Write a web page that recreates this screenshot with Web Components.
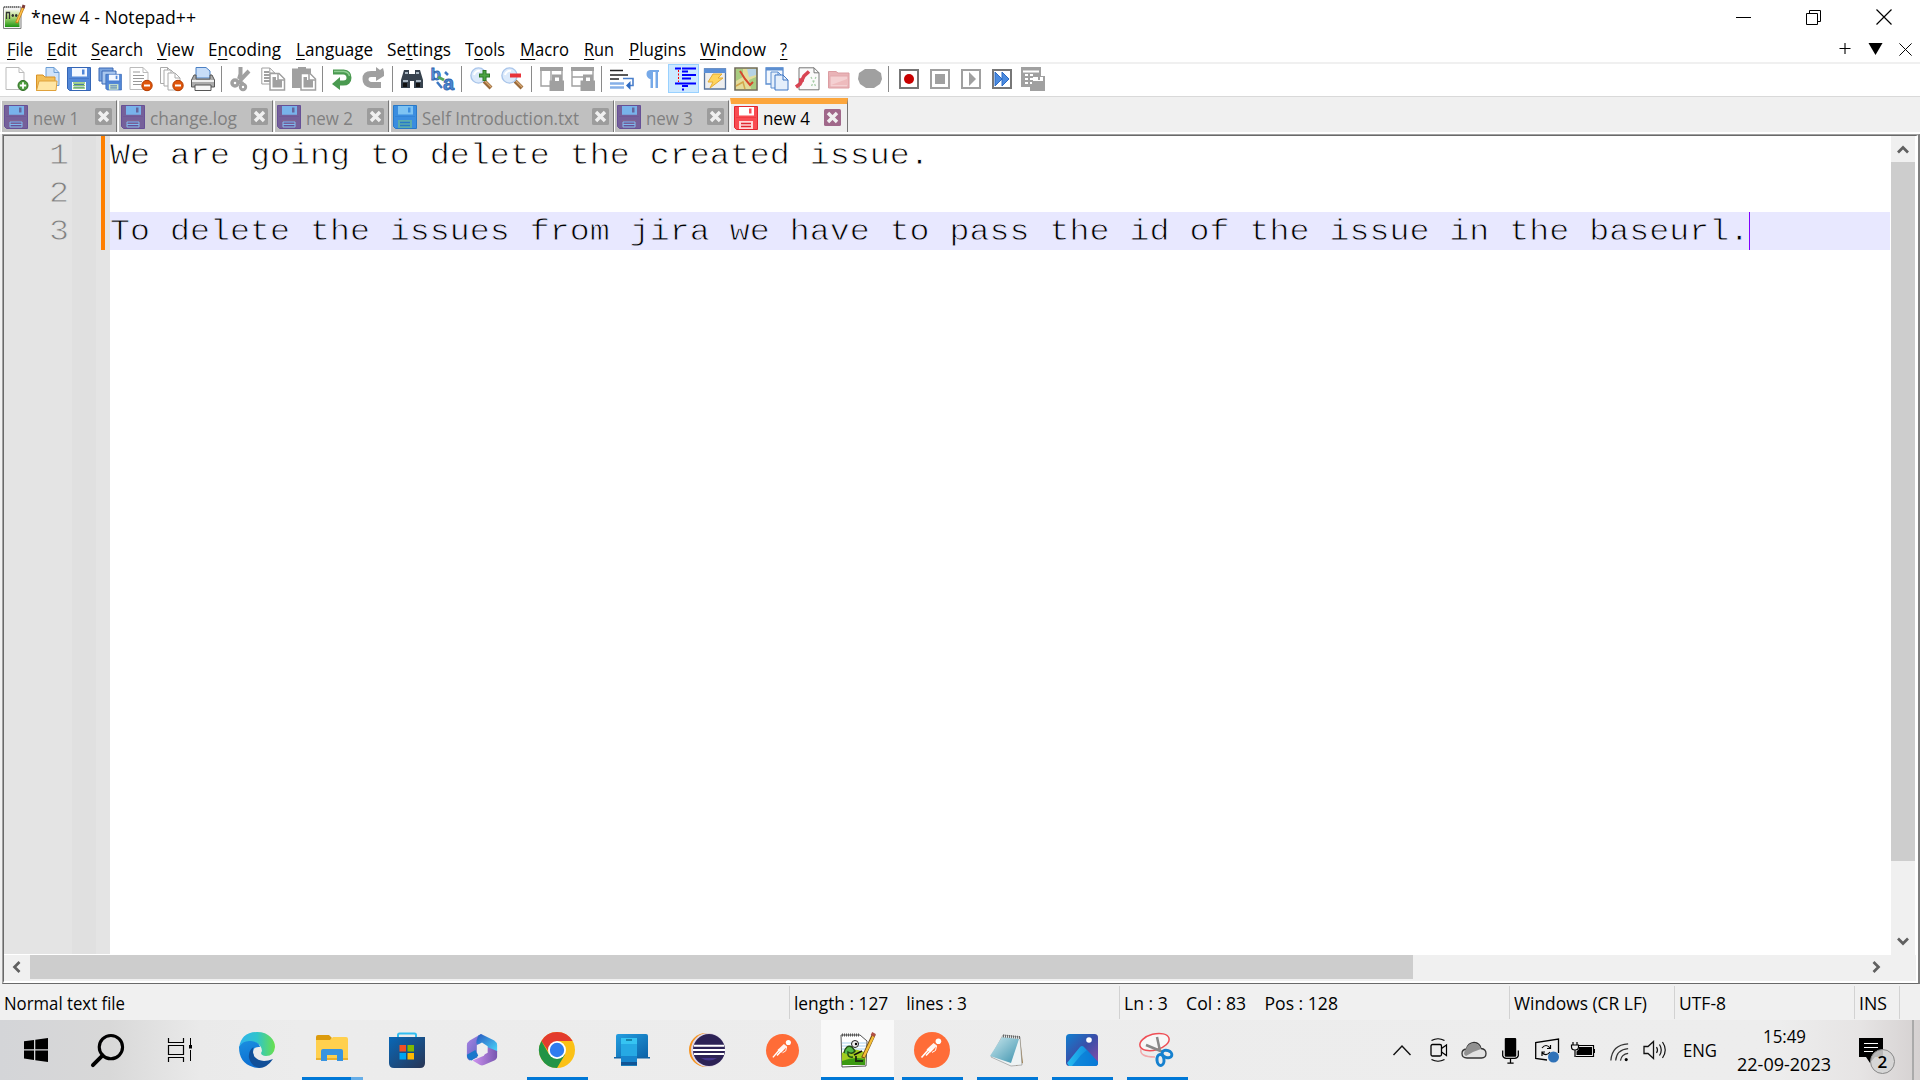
<!DOCTYPE html>
<html lang="en">
<head>
<meta charset="utf-8">
<title>*new 4 - Notepad++</title>
<style>
html,body{margin:0;padding:0;background:#fff;overflow:hidden}
body{width:1920px;height:1080px;font-family:"Open Sans","Liberation Sans",sans-serif;font-size:17.5px;font-weight:370;color:#000}
</style>
</head>
<body>
<app-window></app-window>
<script>
const define=(n,c)=>customElements.define(n,c);
const mount=(el,html)=>{el.attachShadow({mode:'open'}).innerHTML=html;};

const disk=(edge,fill,top,strip)=>`<path d="M.5 .5H23.5V23.5H2.5L.5 21.5Z" fill="${fill}" stroke="${edge}"/><path d="M5 1H20V9.5H5Z" fill="${top}"/><path d="M15 2.5H17.5V7.5H15Z" fill="${fill}"/><path d="M2 11.5H22" stroke="${edge}" stroke-opacity=".4"/><path d="M5 15H19V23H5Z" fill="${strip}"/><path d="M7 17.5H17M7 20.5H17" stroke="${edge}" stroke-width="1.4"/>`;
const page=(x,y,w,h,s='#888',f='#fff')=>`<path d="M${x} ${y}H${x+w-5}L${x+w} ${y+5}V${y+h}H${x}Z" fill="${f}" stroke="${s}"/><path d="M${x+w-5} ${y}V${y+5}H${x+w}" fill="none" stroke="${s}"/>`;
const minus=`<circle cx="18" cy="18.5" r="5.2" fill="#e0570c" stroke="#b33c00"/><path d="M15 18.5H21" stroke="#fff" stroke-width="2"/>`;
const lens=`<path d="M14 14L21 21" stroke="#9a6a3a" stroke-width="4"/><path d="M15 14L21 20" stroke="#d7a873" stroke-width="1.3"/><circle cx="8.5" cy="8.5" r="7.6" fill="#dceafb" stroke="#a9c5ea" stroke-width="1.4"/><path d="M4 8a5 5 0 0 1 6-4" stroke="#fff" stroke-width="2" fill="none"/>`;
const runner=`<path d="M7.5 25.5L15 17M12 23.5L18 17" stroke="#fff" stroke-width="1.6" fill="none"/><path d="M12.5 17.5L19.5 11L23 13.5L16.5 20.5Z" fill="#fff" opacity=".92"/><circle cx="24.4" cy="9.3" r="2.8" fill="#fff"/><path d="M22.5 14L21.5 18.5L18 20.5" stroke="#fff" fill="none"/>`;
const ICONS={
 app:[24,`<defs><linearGradient id="g" y2="1" x2="0"><stop stop-color="#eef3e4"/><stop offset=".4" stop-color="#b5dc7c"/><stop offset="1" stop-color="#1f9413"/></linearGradient></defs><path d="M1.500 2H19V23.500H1.500Z" fill="#f4f4f4" stroke="#808080"/><path d="M2 2H18" stroke="#777" stroke-width="2" stroke-dasharray="1 1"/><path d="M3 5H17.500V22H3Z" fill="url(#g)"/><path d="M4.500 14V7.500H7.500V14M9.500 10.500H12M10.800 9V12M13 10.500H15.500M14.200 9V12" stroke="#333" fill="none" stroke-width="1.300"/><path d="M21.500 2L14.500 18" stroke="#c27d16" stroke-width="3"/><path d="M21 3L15 17" stroke="#ffc24d" stroke-width="1.500"/><path d="M22 0L21 3" stroke="#7c3c3c" stroke-width="3"/>`],
 new:[24,page(1,.5,18,22,'#bbb')+`<circle cx="18" cy="18.5" r="5" fill="#4b9b3b" stroke="#2d6b22"/><path d="M18 15.3V21.7M14.8 18.5H21.2" stroke="#fff" stroke-width="1.8"/>`],
 open:[24,page(10,.5,13,18,'#6d9ed4','#cfe3fa')+`<path d="M.5 8H7L9 10H19V23.5H.5Z" fill="#f2bf58" stroke="#d99226"/><path d="M3 14H21L20 23.5H.5Z" fill="#ffe6a4" stroke="#e0a23c"/>`],
 save:[24,disk('#3465b5','#5388d8','#f4f8ff','#fff')+`<path d="M6 16H18M6 18.5H18M6 21H18" stroke="#8ac66b" stroke-width="1.4"/>`],
 saveall:[24,`<path d="M1 1H15V14H1Z" fill="#7aa4df" stroke="#3a69b5"/><path d="M4 4H18V17H4Z" fill="#a9c7ee" stroke="#3a69b5"/><g transform="translate(7.5 7) scale(.68)">${disk('#3465b5','#5388d8','#f4f8ff','#d9efc8')}</g>`],
 close:[24,page(1,.5,18,22,'#bbb')+`<path d="M4 5H11M4 8.5H15M4 11.5H15M4 14.5H13M4 17.5H12" stroke="#999"/>`+minus],
 closeall:[24,page(.5,.5,12,16,'#aaa')+page(4,3,12,16,'#aaa')+page(8,6,12,17,'#aaa')+minus],
 print:[24,`<path d="M5 11V.5H15L19 4V11Z" fill="#c7ddf8" stroke="#4b80c4"/><path d="M3 8H5V12H19V8H21L23.5 13V20H.5V13Z" fill="#ababab" stroke="#555"/><path d="M1 14H23" stroke="#eee" stroke-width="2"/><path d="M4 18H20V23.5H4Z" fill="#f7f7f7" stroke="#555"/>`],
 cut:[24,`<path d="M10.500 0V7L9 12M19 4L10 13.500" stroke="#a0a0a0" stroke-width="4" fill="none"/><circle cx="5" cy="16" r="3" stroke="#a0a0a0" stroke-width="3.500" fill="none"/><circle cx="13" cy="20" r="2.700" stroke="#a0a0a0" stroke-width="3" fill="none"/><path d="M8 14L13 17" stroke="#a0a0a0" stroke-width="4"/>`],
 copy:[24,page(.8,1,13,16,'#a0a0a0')+`<path d="M3 5H8M3 8H9M3 11H9M3 14H9" stroke="#a0a0a0" stroke-width="2"/>`+`<path d="M9 6.500H18L23.500 12V23H9Z" fill="#fff" stroke="#a0a0a0" stroke-width="1.500"/><path d="M17 7V13H23" fill="#fff" stroke="#a0a0a0" stroke-width="1.500"/><path d="M11.500 10H15V13H21V20.500H11.500Z" fill="#a0a0a0"/>`],
 paste:[24,`<path d="M0 1.500H6V0H14V1.500H19V21H0Z" fill="#a0a0a0"/><path d="M9 6.500H18L23.500 12V23H9Z" fill="#fff" stroke="#a0a0a0" stroke-width="1.500"/><path d="M17 7V13H23" fill="#fff" stroke="#a0a0a0" stroke-width="1.500"/><path d="M11.500 10H15V13H21V20.500H11.500Z" fill="#a0a0a0"/>`],
 undo:[24,`<path d="M2 5H12.500Q18 5.500 18 10.800T12 16H7" stroke="#4a9a50" stroke-width="5" fill="none"/><path d="M9 10V23L1 17Z" fill="#4a9a50"/><path d="M3 4.500H13Q17.500 5 18.500 9" stroke="#8dcc90" stroke-width="1.500" fill="none"/>`],
 redo:[24,`<path d="M16 7H9Q3.500 7 3.500 12T9 18H19" stroke="#a0a0a0" stroke-width="6" fill="none"/><path d="M14 0V14L22 9V5L21 1L18 3Z" fill="#a0a0a0"/>`],
 find:[24,`<path d="M4 3H9V7H15V3H20L23 13V21H14V14H10V21H1V13Z" fill="#37424e"/><path d="M3 14H8M16 14H21M5 6H8M16 6H19" stroke="#a9b6c2" stroke-width="2"/><path d="M3 18H7M16 18H20" stroke="#111" stroke-width="4"/>`],
 replace:[24,`<text x="-.5" y="13" font-family="Liberation Sans" font-weight="bold" font-size="17" fill="#5b94da" stroke="#2c62ad" stroke-width=".8">b</text><text x="12" y="23" font-family="Liberation Sans" font-weight="bold" font-size="20" fill="#4c88d2" stroke="#2c62ad" stroke-width=".8">a</text><path d="M6 15L11 21M14 5L17 8" stroke="#3d77c2" stroke-width="2.500"/><path d="M7 10L13 13" stroke="#54a65a" stroke-width="3"/>`],
 zoomin:[24,lens+`<path d="M14.500 3V14M9 8.500H20" stroke="#2d7827" stroke-width="4"/><path d="M14.500 4V13M10 8.500H19" stroke="#4da344" stroke-width="2"/>`],
 zoomout:[24,lens+`<path d="M9 8.500H20" stroke="#e8333a" stroke-width="4"/>`],
 syncv:[24,`<path d="M1 1H22V19H1ZM11 1V19" fill="none" stroke="#a0a0a0" stroke-width="1.400"/><path d="M0 2H23" stroke="#a0a0a0" stroke-width="4"/><path d="M12 9.500H20V7H16Z" fill="#fff"/><path d="M9.500 13.500H24V24H9.500Z" fill="#a0a0a0"/><path d="M13.500 14V9H20.500V14" fill="#fff" stroke="#a0a0a0" stroke-width="3"/>`],
 synch:[24,`<path d="M1 1H22V19H1ZM1 10H22" fill="none" stroke="#a0a0a0" stroke-width="1.400"/><path d="M0 2H23" stroke="#a0a0a0" stroke-width="4"/><path d="M9.500 13.500H24V24H9.500Z" fill="#a0a0a0"/><path d="M13.500 14V9H20.500V14" fill="#fff" stroke="#a0a0a0" stroke-width="3"/>`],
 wrap:[24,`<path d="M0 3.500H13M0 8H18M0 12H9" stroke="#222" stroke-width="1.500"/><path d="M0 16.500H14M0 20.500H14" stroke="#86b0e8" stroke-width="2.500"/><path d="M13 11.500H23V18.500H19" fill="none" stroke="#4a7fcb" stroke-width="1.600"/><path d="M20.500 14V23L16 18.500Z" fill="#2f6bc2"/>`],
 pilcrow:[24,`<path d="M18 3H9Q5.500 3.500 5.500 7T9 12H9.500V21H12V5H14.500V21H17V5H18Z" fill="#76a9e8"/>`],
 indent:[24,`<path d="M3 1.500H9M10 1.500H24M10 4.500H16M10 8H24M10 11.500H19M3 16.500H24M3 16.500H9M10 19H16M10 22.500H12" stroke="#00f" stroke-width="2"/><path d="M6.500 3V15" stroke="red" stroke-width="1" stroke-dasharray="2 1.500"/>`],
 udl:[24,`<path d="M1.500 2H22.500V22H1.500Z" fill="#eee" stroke="#58749c" stroke-width="1.300"/><path d="M1 1.500H23V6H1Z" fill="#5b8fd6"/><path d="M10 7H19L15 11H20L7 21L10 15H5Z" fill="#ffd45d" stroke="#e6ad35"/>`],
 map:[24,`<path d="M1 1H23V23H1Z" fill="#e3dc9b" stroke="#6f6c5b" stroke-width="1.600"/><path d="M2 2H9V10L2 14ZM15 13L22 10V22H17Z" fill="#a9cc80"/><path d="M13 2H22V8L15 10Z" fill="#b5d2e4"/><path d="M6 4L11 12L16 18L19 15" stroke="#d6472d" stroke-width="2" fill="none"/><path d="M2 19L9 15L11 22" stroke="#d3a64b" stroke-width="1.500" fill="none"/>`],
 doclist:[24,`<path d="M1 1H18V17H1Z" fill="#f2f7fd" stroke="#5c8ed0" stroke-width="1.300"/><path d="M1 2H18" stroke="#5c8ed0" stroke-width="3"/>`+page(6,5,12,16,'#5c8ed0','#e5effb')+page(10,8,13,15,'#3f77c4','#e5effb')],
 func:[24,page(3,.8,20,22,'#777','#fafafa')+`<path d="M0 20L4 17L8 9L13 4.500M3 13H8" fill="none" stroke="#d84452" stroke-width="3.600"/><path d="M15 10L20 20M20 10L15 20" stroke="#a8cda8" stroke-width="1.300" stroke-dasharray="2 2"/>`],
 folder:[24,`<path d="M1.500 4.500H9L11 6H22V21H1.500Z" fill="#e9b3b7" stroke="#dc9da2"/><path d="M3 9H21V20H3Z" fill="#f4d0d2" stroke="#e3a9ad"/><path d="M4 18L20 12V18Z" fill="#eebbbd"/>`],
 monitor:[24,`<path d="M7 2H17L23 6L24 12L22 17L16 21H8L2 17L0 12L1 6Z" fill="#a0a0a0"/>`],
 rec:[24,`<path d="M3 3H21V21H3Z" fill="#fff" stroke="#777" stroke-width="2"/><circle cx="12" cy="12" r="5" fill="#c80000"/>`],
 stop:[24,`<path d="M3 3H21V21H3Z" fill="#fff" stroke="#a0a0a0" stroke-width="2"/><path d="M7 7H17V17H7Z" fill="#a0a0a0"/>`],
 play:[24,`<path d="M3 3H21V21H3Z" fill="#fff" stroke="#a0a0a0" stroke-width="2"/><path d="M10 5L17 12L10 19Z" fill="#a0a0a0"/>`],
 ff:[24,`<path d="M3 3H21V21H3Z" fill="#fff" stroke="#777" stroke-width="2"/><path d="M5 5L12 12L5 19ZM12 5L19 12L12 19Z" fill="#4b8be0" stroke="#2b6ac4"/>`],
 macro:[24,`<path d="M0 0H20V9H24V24H9V20H0Z" fill="#a0a0a0"/><path d="M2 4.500H18M4 8H7M9 8H12M4 12H7M9 12H12M4 16H7M9 16H11" stroke="#fff" stroke-width="1.800"/><path d="M12 10H22V14H12Z" fill="#fff"/><path d="M18 10V13" stroke="#a0a0a0" stroke-width="2"/>`],
 diskOld:[24,disk('#665096','#75609a','#7ebaf0','#806492')+`<path d="M5 1H20V9.500H5Z" fill="#78b3eb"/><path d="M15 2.500H17.500V7.500H15Z" fill="#65659d"/><path d="M6 17H18V22H6Z" fill="none" stroke="#7ebaf0"/><path d="M6 19.500H18" stroke="#7ebaf0"/>`],
 diskBlue:[24,disk('#2879c7','#3b8de0','#7ec3f3','#5cacad')],
 diskRed:[24,disk('#e02730','#f94c52','#fff','#ffd9d9')],
 win:[24,`<path d="M0 3.300L10 1.900V11.300H0ZM11.300 1.700L24 0V11.300H11.300ZM0 12.500H10V22L0 20.600ZM11.300 12.500H24V24L11.300 22.300Z"/>`],
 search:[36,`<circle cx="21.500" cy="14.500" r="12" fill="none" stroke="#000" stroke-width="3.200"/><path d="M13 23L3 33" stroke="#000" stroke-width="4" stroke-linecap="round"/>`],
 task:[24,`<path d="M.5 0V4.500H15.500V0M.5 24V19.500H15.500V24M.5 7.500H15.500V16.500H.5Z" fill="none" stroke="#000" stroke-width="1.200"/><path d="M22.500 0V7M22.500 12V23" stroke="#000"/><path d="M21 7H24V10.500H21Z"/>`],
 edge:[36,`<defs><linearGradient id="a" x2="1"><stop stop-color="#2fb3ee"/><stop offset=".5" stop-color="#2fc4cc"/><stop offset="1" stop-color="#69e04b"/></linearGradient><linearGradient id="b" y2="1" x2=".3"><stop stop-color="#1b8fe0"/><stop offset="1" stop-color="#0c6ed1"/></linearGradient></defs><path d="M0 16Q2 0 18 0C30 0 36 8 36 15Q35 24 27 24Q20 23 23 19Q22 10 12 10Q4 10 0 16Z" fill="url(#a)"/><path d="M0 15Q4 8 12 9Q20 10 21 15Q14 14 14 21Q16 31 26 34Q20 37 14 35Q0 31 0 15Z" fill="url(#b)"/><path d="M14.500 15Q9 19 10 26Q12 34 20 36Q28 36 34 27Q21 32 15 24Q13 19 14.500 15Z" fill="#114f98"/>`],
 explorer:[32,`<path d="M0 3Q0 1 2 1H13L16 4L13 8H0Z" fill="#dc9b0c"/><path d="M0 6H14L17 3H30Q32 3 32 5V26H0Z" fill="#ffd04e"/><path d="M0 24H32V26H0Z" fill="#eab02e"/><path d="M5 27V17Q5 15 7 15H25Q27 15 27 17V27H21V21H11V27Z" fill="#3894e0"/>`],
 store:[36,`<defs><linearGradient id="s" x2="1" y2="1"><stop stop-color="#0868b8"/><stop offset="1" stop-color="#293554"/></linearGradient></defs><path d="M9 6V3Q9 1.500 10.500 1.500H25.500Q27 1.500 27 3V6" fill="none" stroke="#31bdf0" stroke-width="2"/><path d="M0 5H36V31Q36 36 31 36H5Q0 36 0 31Z" fill="url(#s)"/><path d="M10.500 13H17V19.500H10.500Z" fill="#f25022"/><path d="M18.500 13H25V19.500H18.500Z" fill="#7fba00"/><path d="M10.500 21H17V27.500H10.500Z" fill="#00a4ef"/><path d="M18.500 21H25V27.500H18.500Z" fill="#ffb900"/>`],
 office:[36,`<defs><linearGradient id="o" y2="1"><stop stop-color="#b084e6"/><stop offset="1" stop-color="#4d62ba"/></linearGradient><linearGradient id="p" x2="1" y2="1"><stop stop-color="#2858c0"/><stop offset="1" stop-color="#4ad7fa"/></linearGradient><linearGradient id="q" x2="1"><stop stop-color="#cf94f0"/><stop offset="1" stop-color="#7756b0"/></linearGradient></defs><path d="M17 1L5 8Q2 10 2 13V25Q2 28 5 29L13 26V13L19 10Z" fill="url(#o)"/><path d="M17 1L31 8Q34 10 34 13V20L24 16L12 11Q12 3 17 1Z" fill="url(#p)"/><path d="M8 29L20 24L24 15L34 19V25Q34 28 31 29L20 34Q18 35 16 34Z" fill="url(#q)"/><path d="M2 23L11 18L14 24L7 29Q2 28 2 23Z" fill="#1978cb"/><path d="M12.500 13L18 10L24 14V21L18 24L12.500 21Z" fill="#eee"/>`],
 chrome:[36,`<circle cx="18" cy="18" r="18" fill="#fbc116"/><path d="M2.400 9A18 18 0 0 1 33.600 9H18L12 23Z" fill="#e33b2e"/><path d="M2.400 9A18 18 0 0 0 18 36L26 22.500L10.200 22.500Z" fill="#229446"/><circle cx="18" cy="18" r="9" fill="#fff"/><circle cx="18" cy="18" r="7.200" fill="#2e7cef"/>`],
 phone:[36,`<defs><linearGradient id="h" x2="1" y2="1"><stop stop-color="#249ee0"/><stop offset="1" stop-color="#0b62a8"/></linearGradient></defs><path d="M2 4Q2 2 4 2H32Q34 2 34 4V25H2Z" fill="url(#h)"/><path d="M0 25H36V26.500H0Z" fill="#1263a3"/><path d="M7 7H23V34H7Z" fill="#26a9e4"/><path d="M7 6H23V12H7Z" fill="#36c4f2"/><path d="M7 24H23V30H7Z" fill="#1785cd"/><path d="M7 30H23V33.500H7Z" fill="#105495"/><path d="M12 8H18" stroke="#1684ad" stroke-width="2"/>`],
 eclipse:[36,`<circle cx="17" cy="18" r="17" fill="#f7941e"/><circle cx="19" cy="18" r="17" fill="#e0d8e8"/><circle cx="20" cy="18" r="16" fill="#2c2255"/><path d="M5 13.800H35M4 18H36M5 22H35" stroke="#fff" stroke-width="2"/><path d="M12 26Q20 31 28 26" fill="#43358c"/>`],
 postman:[36,`<circle cx="18" cy="18" r="18" fill="#ff6c37"/>`+runner],
 npp:[36,`<path d="M2 3H21L28 9L27 34L3 35Z" fill="#fff" stroke="#555"/><path d="M3 3H20" stroke="#555" stroke-dasharray="1 1" stroke-width="3"/><path d="M3 11H27M3 14H27M3 17H27" stroke="#a9d2ed"/><path d="M3 21Q14 14 27 21L26 33H3Z" fill="#a2cc1f"/><path d="M3 29Q15 24 26 27V33H3Z" fill="#3c9a12"/><path d="M5 21Q7 12 13 15L16 19Q13 23 9 20Q8 26 14 25" stroke="#234d13" fill="#55b948" stroke-width="1.500"/><circle cx="16" cy="12" r="3.500" fill="#eee" stroke="#222"/><circle cx="17" cy="12" r="1.200"/><path d="M15 23L23 19M17 28V24M16 29H24" stroke="#111" stroke-width="1.600"/><path d="M35 2L24 26" stroke="#704b14" stroke-width="3.800"/><path d="M34.500 4L24.500 25" stroke="#f4be38" stroke-width="2.400"/><path d="M35 1L33.500 4" stroke="#b05046" stroke-width="4"/>`],
 notepad:[36,`<defs><linearGradient id="n" x2="1" y2="1"><stop stop-color="#cce9ef"/><stop offset="1" stop-color="#3d93ae"/></linearGradient></defs><path d="M27 5L31 6L34 31L27 34Z" fill="#a48048"/><path d="M14 3L31 5L33 33L22 34L2 25Z" fill="#eef3f4" stroke="#888" stroke-width=".6"/><path d="M13 5L30 7L22 31L1 24Z" fill="url(#n)"/><path d="M14 4L31 5.500" stroke="#666" stroke-width="3" stroke-dasharray="1 1"/>`],
 photos:[36,`<defs><linearGradient id="v" x2="1" y2="1"><stop stop-color="#117fd0"/><stop offset=".5" stop-color="#3a4ea8"/><stop offset="1" stop-color="#8f4ca8"/></linearGradient><linearGradient id="w" x2="1"><stop stop-color="#27bdf0"/><stop offset="1" stop-color="#0878d8"/></linearGradient></defs><rect x="2" y="2" width="32" height="32" rx="3.500" fill="url(#v)"/><circle cx="25" cy="8" r="2.800" fill="#fff"/><path d="M3 31L16 15Q18 13 20 15L34 30V31Q34 34 31 34H5Z" fill="url(#w)"/><path d="M17 23L23 18L34 30Q34 34 31 34H8Z" fill="#0879d4" opacity=".7"/>`],
 snip:[36,`<ellipse cx="16" cy="10" rx="15" ry="8" transform="rotate(-15 16 12)" fill="#f7f7f7" stroke="#ef4e55" stroke-width="1.500"/><path d="M2 17Q0 25 16 25" fill="none" stroke="#f2a8ab" stroke-width="1.500"/><path d="M7 13L24 20M18 5L21 19" stroke="#888" stroke-width="2.500"/><ellipse cx="28" cy="22" rx="5" ry="3.500" fill="none" stroke="#1681cf" stroke-width="3" transform="rotate(20 28 22)"/><ellipse cx="21.500" cy="28" rx="3.500" ry="5.500" fill="none" stroke="#1681cf" stroke-width="3" transform="rotate(-5 21 28)"/>`],
 chevron:[24,`<path d="M3.500 17L12 8L20.500 17" fill="none" stroke="#111" stroke-width="1.400"/>`],
 camera:[24,`<path d="M5.500 2.500Q12-1 18.500 2.500M5.500 21.500Q12 25 18.500 21.500" fill="none" stroke="#000" stroke-width="1.200"/><rect x="5" y="6.500" width="10.500" height="11.500" rx="1.500" fill="none" stroke="#000" stroke-width="1.300"/><path d="M15.500 10.500L20.500 7V17.500L15.500 14" fill="none" stroke="#000" stroke-width="1.200"/>`],
 cloud:[24,`<path d="M5 20Q0 20 0 15.500Q0 11.500 4.500 11Q6 5 12 4.500Q18 5 19 10.500Q24 11 24 15.500Q24 20 19.500 20Z" fill="#e2e2e2" stroke="#333" stroke-width="1.300"/><path d="M4 11Q6 5 12 5Q18 6 19 11L11 14L4 18Q0 16 4 11Z" fill="#909090"/>`],
 mic:[24,`<rect x="6.500" y="0" width="11" height="18" rx="1"/><path d="M4.500 12V17Q5 19.500 8 19.500H16Q19 19.500 19.500 17V12M12 20V24M9 24H15" fill="none" stroke="#000" stroke-width="1.200"/>`],
 update:[24,`<path d="M12 22L.7 20.500V4.500L23.500 1V15" fill="none" stroke="#000" stroke-width="1.300"/><path d="M7 10Q11 5 15 10M15.500 7V10.500H12M15 14Q11 19 7 14.500M7 18V14H10" fill="none" stroke="#000" stroke-width="1.200"/><circle cx="18.500" cy="19" r="5.500" fill="#2f72b8"/>`],
 battery:[24,`<path d="M5 7.500H22.500V18.500H4.500" fill="none" stroke="#000" stroke-width="1.200"/><path d="M8 9H21V17H5.500V13.500L8 11ZM22.500 11H24V15H22.500Z"/><path d="M2 4V7M6 4V7M.5 7H7.500V9Q7.500 12 4 12T.5 9ZM4 12V19" fill="#eee" stroke="#000" stroke-width="1.200"/>`],
 wifi:[24,`<path d="M3 22.500Q4 6 21 5M8 22.500Q9 11 21 10M13 22.500Q14 16 21 15" fill="none" stroke="#333" stroke-width="1.300"/><circle cx="19" cy="21.500" r="1.600"/>`],
 volume:[24,`<path d="M1 8.500H5L10.500 3.500V20.500L5 15.500H1Z" fill="none" stroke="#111" stroke-width="1.300"/><path d="M13.500 9Q15.500 12 13.500 15M16.500 6.500Q20 12 16.500 17.500M19.500 4Q25 12 19.500 20" fill="none" stroke="#111" stroke-width="1.200"/>`],
 min:[16,`<path d="M0 8.500H15" stroke="#000"/>`],
 restore:[16,`<path d="M.5 4.500H11.500V15.500H.5ZM3.500 4.500V1.500H14.500V12.500H11.500" fill="none" stroke="#000"/>`],
 x:[16,`<path d="M.5 .5L15.500 15.500M15.500 .5L.5 15.500" stroke="#000" stroke-width="1.200"/>`],
 plus:[16,`<path d="M2.500 8.500H13.500M8 3V14" stroke="#000" stroke-width="1.100"/>`],
 down:[16,`<path d="M.5 2H15.500L8 15Z"/>`],
 tabx:[17,`<rect width="17" height="17" rx="1.500" fill="currentColor"/><path d="M4 4L13 13M13 4L4 13" stroke="#f0f0f0" stroke-width="3.400"/>`],
 arrow:[16,`<path d="M3 10.500L8 5.500L13 10.500" fill="none" stroke="#606060" stroke-width="2.700"/>`],
};
define('ui-icon',class extends HTMLElement{connectedCallback(){
 const [v,p]=ICONS[this.getAttribute('name')],s=this.getAttribute('size')||v;
 mount(this,`<style>:host{display:block;flex:none;width:${s}px;height:${s}px}svg{display:block;overflow:visible}</style><svg width="${s}" height="${s}" viewBox="0 0 ${v} ${v}">${p}</svg>`);
}});

/* Text that is stretched or condensed to an exact width. */
define('fit-text',class extends HTMLElement{connectedCallback(){
 const w=+this.getAttribute('w');
 mount(this,`<style>:host{display:block;flex:none;width:${w}px;white-space:pre;line-height:24px}span{display:inline-block;transform-origin:0 50%}u{text-decoration:none;border-bottom:1px solid;display:inline-block;line-height:19px}</style><span></span>`);
 const s=this.shadowRoot.querySelector('span');
 s.innerHTML=this.getAttribute('label').replace(/_(.)/,'<u>$1</u>');
 s.style.transform=`scaleX(${w/s.getBoundingClientRect().width})`;
}});

define('title-bar',class extends HTMLElement{connectedCallback(){mount(this,`<style>:host{display:flex;height:34px;align-items:center;box-sizing:border-box;padding:0 28.500px 0 2px}.g{flex:1}fit-text{margin-left:5px}.c{display:flex;gap:54px;margin-top:-1px}</style>
<ui-icon name="app"></ui-icon><fit-text label="*new 4 - Notepad++" w="165"></fit-text><div class="g"></div><div class="c"><ui-icon name="min"></ui-icon><ui-icon name="restore"></ui-icon><ui-icon name="x"></ui-icon></div>`);}});

define('menu-bar',class extends HTMLElement{connectedCallback(){
 const m=[['_File',26],['_Edit',30],['_Search',52],['_View',37],['E_ncoding',73],['_Language',77],['Se_ttings',64],['T_ools',40],['_Macro',49],['_Run',30],['_Plugins',57],['_Window',66],['_?',7]];
 const x=[7,47,91,157,208,296,387,465,520,584,629,700,780];
 mount(this,`<style>:host{display:flex;height:28px;border-bottom:2px solid #f0f0f0;padding:0 8px 0 7px;align-items:center}.g{flex:1}.c{display:flex;gap:15px;align-items:center}.c ui-icon:nth-child(3){margin-left:1px;margin-top:2px}fit-text{margin-top:1px}</style>${m.map(([t,w],i)=>`<fit-text label="${t}" w="${w}" style="margin-right:${i<12?x[i+1]-x[i]-w:0}px"></fit-text>`).join('')}<div class="g"></div><div class="c"><ui-icon name="plus"></ui-icon><ui-icon name="down" size="15"></ui-icon><ui-icon name="x" size="13"></ui-icon></div>`);}});

define('tool-bar',class extends HTMLElement{connectedCallback(){
 const t='new open save saveall close closeall print | cut copy paste | undo redo | find replace | zoomin zoomout | syncv synch | wrap pilcrow indent udl map doclist func folder monitor | rec stop play ff macro'.split(' ');
 mount(this,`<style>:host{display:flex;height:32px;border-bottom:1px solid #d9d9d9;padding-left:1.500px}.t{width:31px;flex:none;height:30px;display:flex;justify-content:center;align-items:center}.on{background:#cce8ff;box-shadow:inset 0 0 0 1px #99d1ff;height:29px}.s{width:7.800px;flex:none}.s:before{content:"";display:block;width:1px;height:26px;margin:2px 0 0 2.500px;background:#8a8a8a}</style>${t.map(n=>n=='|'?'<div class="s"></div>':`<div class="t ${n=='indent'?'on':''}"><ui-icon name="${n}"></ui-icon></div>`).join('')}`);}});

define('doc-tab',class extends HTMLElement{connectedCallback(){
 const a=this.hasAttribute('active');
 mount(this,`<style>:host{display:flex;flex:none;box-sizing:border-box;height:${a?34:32}px;background:${a?'#f0f0f0':'#c0c0c0'};color:${a?'#000':'#808080'};padding:${a?0:1}px 4px 0 ${a?3:2}px;border-left:1px solid #fff;border-right:1px solid #777;border-top:${a?'6px solid #fca63c':'1px solid #f0f0f0'};align-items:center}
 fit-text{margin-left:5px;margin-top:${a?0:2}px}.x{margin-left:auto;color:${a?'#a0688a':'#9c9c9c'};margin-top:-1px}.d{margin-top:-1px}:host([active]) .x{margin-right:2px}</style><ui-icon class="d" name="${this.getAttribute('disk')}"></ui-icon><fit-text label="${this.getAttribute('label')}" w="${this.getAttribute('w')}"></fit-text><ui-icon class="x" name="tabx"></ui-icon>`);}});

define('tab-strip',class extends HTMLElement{connectedCallback(){
 const T=[['new 1',46,116,'diskOld'],['change.log',87,155,'diskOld'],['new 2',47,115,'diskOld'],['Self Introduction.txt',157,224,'diskBlue'],['new 3',47,115,'diskOld'],['new 4',47,118,'diskRed']];
 mount(this,`<style>:host{display:flex;height:35px;background:#f0f0f0;border-bottom:2px solid #fff;padding-left:1px;align-items:flex-end;box-sizing:content-box}doc-tab{margin-right:1px}doc-tab:nth-child(5){margin-right:0}</style>${T.map(([l,w,b,d],i)=>`<doc-tab label="${l}" w="${w}" disk="${d}" style="width:${b}px" ${i==5?'active':''}></doc-tab>`).join('')}`);}});

define('code-line',class extends HTMLElement{connectedCallback(){
 const t=this.getAttribute('text'),c=this.hasAttribute('current');
 mount(this,`<style>:host{display:flex;height:38px;background:${c?'#e8e8ff':'#fff'}}
 .n{width:68px;background:#e4e4e4;color:#808080;box-sizing:border-box;padding-right:3px;text-align:right;-webkit-text-stroke-color:#e4e4e4}.n span{transform-origin:100% 50%}
 .f{width:24px;background:#e0e0e0}.b{width:5px;background:#e4e4e4}.o{width:4px;background:#ff8000}
 .n,.t{font:30px/40px "Liberation Mono",monospace;white-space:pre;-webkit-text-stroke-width:.8px;height:38px}.t{-webkit-text-stroke-color:${c?'#e8e8ff':'#fff'};width:${t.length*19.99}px}span{display:inline-block;transform:scaleX(1.1104);transform-origin:0 50%}
 .k{width:1px;background:#8000ff}</style><div class="n"><span>${this.getAttribute('n')}</span></div><div class="f"></div><div class="b"></div><div class="o"></div><div class="b"></div><div class="t"><span>${t}</span></div>${c?'<div class="k"></div>':''}`);}});

define('text-editor',class extends HTMLElement{connectedCallback(){
 mount(this,`<style>:host{display:flex;flex-direction:column;height:850px;box-sizing:border-box;border-top:1px solid #a0a0a0;border-bottom:1px solid #696969;margin-left:2px;border-left:1px solid #a0a0a0;border-right:2px solid #808080}
 .in{border-top:1px solid #696969;border-left:1px solid #696969;border-right:2px solid #fff;border-bottom:2px solid #fff;display:flex;flex-direction:column;flex:1}
 .r{display:flex;height:819px;background:#fff}.m{width:1886px;display:flex;flex-direction:column}.rest{flex:1;display:flex;margin-bottom:1px}.rest i:nth-child(1){width:68px;background:#e4e4e4}.rest i:nth-child(2){width:24px;background:#e0e0e0}.rest i:nth-child(3){width:14px;background:#e4e4e4}
 .v{width:24px;margin-left:1px;background:#f0f0f0;display:flex;flex-direction:column;align-items:center}.v i{display:block;width:24px;height:699px;background:#cdcdcd}.v ui-icon,.h ui-icon{margin:5px 0}.v ui-icon:last-child{margin-top:auto;margin-bottom:6px;transform:rotate(180deg)}.v ui-icon:first-child{margin:6px 0 4px}
 .h{height:24px;background:#f0f0f0;display:flex;align-items:center}.h i{height:24px;width:1383px;background:#cdcdcd}.h ui-icon:first-child{margin:0 5px;transform:rotate(-90deg)}.h ui-icon:last-child{margin-left:auto;margin-right:32px;transform:rotate(90deg)}</style>
 <div class="in"><div class="r"><div class="m"><code-line n="1" text="We are going to delete the created issue."></code-line><code-line n="2" text=""></code-line><code-line n="3" current text="To delete the issues from jira we have to pass the id of the issue in the baseurl."></code-line><div class="rest"><i></i><i></i><i></i></div></div><div class="v"><ui-icon name="arrow"></ui-icon><i></i><ui-icon name="arrow"></ui-icon></div></div><div class="h"><ui-icon name="arrow"></ui-icon><i></i><ui-icon name="arrow"></ui-icon></div></div>`);}});

define('status-bar',class extends HTMLElement{connectedCallback(){
 const S=[['Normal text file',121,790],['length : 127    lines : 3',173,330],['Ln : 3    Col : 83    Pos : 128',214,390],['Windows (CR LF)',133,165],['UTF-8',47,180],['INS',28,45]];
 mount(this,`<style>:host{display:flex;height:36px;background:#f0f0f0}div{box-sizing:border-box;border-right:1px solid #d2d2d2;margin-top:2px;height:33px;padding:5px 0 0 4px}div:first-child{padding-left:2px}fit-text{margin-left:-.5px}</style>${S.map(([l,w,b])=>`<div style="width:${b}px"><fit-text label="${l}" w="${w}"></fit-text></div>`).join('')}`);}});

define('task-bar',class extends HTMLElement{connectedCallback(){
 const A=[['edge',36],['explorer',32,'two'],['store',36],['office',34],['chrome',36,'run'],['phone',36],['eclipse',36],['postman',33],['npp',36,'act'],['postman',36,'run'],['notepad',36,'run'],['photos',36,'run'],['snip',36,'run']];
 const R=[['chevron',24],['camera',24],['cloud',24],['mic',25],['update',24],['battery',24],['wifi',23],['volume',24]];
 mount(this,`<style>:host{display:flex;height:60px;background:linear-gradient(90deg,#d4d5d8 0,#d8d8d8 110px,#eaeaea 200px,#ececec 300px,#ededed 1780px,#e6e4e4 1860px,#d5d1d1 1920px)}
 .sys{display:flex;width:219.500px;align-items:center}.sys ui-icon:nth-child(1){margin-left:24px}.sys ui-icon:nth-child(2){margin-left:42px}.sys ui-icon:nth-child(3){margin-left:43px;margin-top:-1px}
 .a{width:75px;flex:none;height:60px;display:flex;align-items:center;justify-content:center;position:relative}
 .a.run:after,.a.two:after,.a.act:after{content:"";position:absolute;left:7px;bottom:0;width:61px;height:3px;background:#0078d7}.a.two:after{background:linear-gradient(90deg,#0078d7 49px,#66aee8 49px)}
 .a.act{background:linear-gradient(#f9f9f9,#f9f9f9) 1px 0/73px 60px no-repeat}.a.act:after{left:1px;width:73px}
 .tray{display:flex;align-items:center;margin-left:195px;gap:12.200px;flex:none}
 .e{margin:18px 0 0 16px}.c{margin:4px 0 0 20.500px;width:94px;flex:none;display:flex;flex-direction:column;align-items:center;gap:4px}
 .n{position:relative;flex:none;width:40px;height:60px;margin-left:27px}.n svg{display:block}.n b{position:absolute;left:11.500px;top:28.500px;width:23px;height:23px;border:1px solid #888;border-radius:50%;background:#d4d4d4dd;font:600 17px/24px "Open Sans",sans-serif;text-align:center}
 .z{margin-left:auto;margin-right:6px;width:2px;background:#aaa}</style>
 <div class="sys"><ui-icon name="win"></ui-icon><ui-icon name="search" size="35"></ui-icon><ui-icon name="task"></ui-icon></div>${A.map(([n,s,k])=>`<div class="a ${k||''}"><ui-icon name="${n}" size="${s}"></ui-icon></div>`).join('')}
 <div class="tray">${R.map(([n,s])=>`<ui-icon name="${n}" size="${s}"></ui-icon>`).join('')}</div><fit-text class="e" label="ENG" w="34"></fit-text><div class="c"><fit-text label="15:49" w="43"></fit-text><fit-text label="22-09-2023" w="94"></fit-text></div>
 <div class="n"><svg width="40" height="60"><path d="M1 18H25V37H17L12 43L8 37H1Z"/><path d="M6 23.500H20M6 27.500H20M6 31.500H15" stroke="#fff"/></svg><b>2</b></div><div class="z"></div>`);}});

define('app-window',class extends HTMLElement{connectedCallback(){mount(this,`<style>:host{display:flex;flex-direction:column;width:1920px;height:1080px;overflow:hidden;background:#fff}:host>*{flex:none}.w{background:#f0f0f0}</style><title-bar></title-bar><menu-bar></menu-bar><tool-bar></tool-bar><tab-strip></tab-strip><div class="w"><text-editor></text-editor></div><status-bar></status-bar><task-bar></task-bar>`);}});
</script>
</body>
</html>
